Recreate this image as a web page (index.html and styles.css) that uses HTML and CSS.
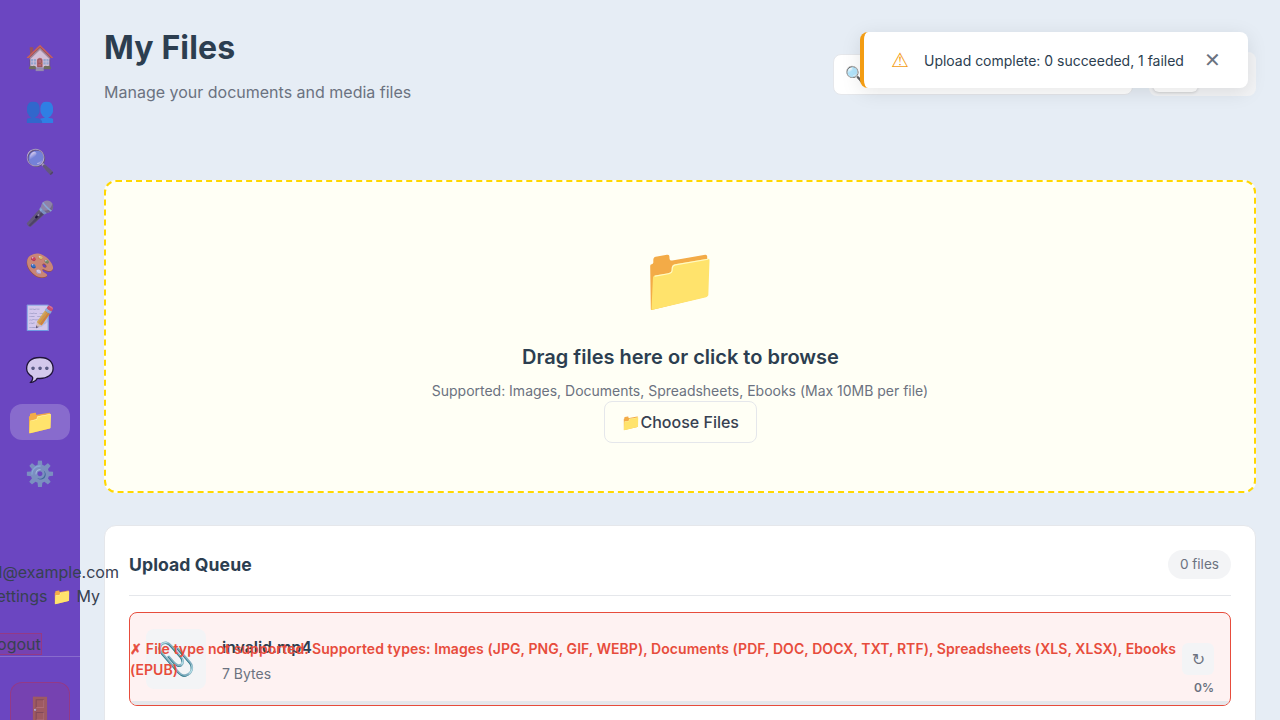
FILE: index.html
```html
<!DOCTYPE html>
<html lang="en">
<head>
<meta charset="utf-8">
<title>My Files</title>
<link rel="stylesheet" href="styles.css">
</head>
<body>
<div class="app">
  <aside class="sidebar">
    <nav class="nav">
      <a class="nav-item"><span>🏠</span></a>
      <a class="nav-item"><span>👥</span></a>
      <a class="nav-item"><span>🔍</span></a>
      <a class="nav-item"><span>🎤</span></a>
      <a class="nav-item"><span>🎨</span></a>
      <a class="nav-item"><span>📝</span></a>
      <a class="nav-item"><span>💬</span></a>
      <a class="nav-item active"><span>📁</span></a>
      <a class="nav-item"><span>⚙️</span></a>
    </nav>
    <div class="user-menu">
      <div class="user-line line-email">l@example.com</div>
      <div class="user-line line-links">ettings 📁 My</div>
      <div class="user-line line-logout"><span class="logout-link">Logout</span></div>
    </div>
    <div class="sidebar-foot"><a class="door"><span>🚪</span></a></div>
  </aside>
  <main class="main">
    <header class="header">
      <div>
        <h1 class="title">My Files</h1>
        <p class="subtitle">Manage your documents and media files</p>
      </div>
      <div class="tools">
        <div class="search">🔍</div>
        <div class="toggle"><div class="toggle-active"></div></div>
      </div>
    </header>
    <section class="dropzone">
      <div class="drop-icon">📁</div>
      <h3 class="drop-title">Drag files here or click to browse</h3>
      <p class="drop-text">Supported: Images, Documents, Spreadsheets, Ebooks (Max 10MB per file)</p>
      <button class="choose"><span>📁</span><span>Choose Files</span></button>
    </section>
    <section class="queue">
      <div class="queue-head">
        <h3 class="queue-title">Upload Queue</h3>
        <span class="count">0 files</span>
      </div>
      <div class="file">
        <div class="thumb">📎</div>
        <div class="info">
          <div class="name">invalid.mp4</div>
          <div class="size">7 Bytes</div>
        </div>
        <div class="retry">↻</div>
        <div class="track"></div>
        <div class="percent">0%</div>
        <div class="error"><div><span class="symbol">✗</span> File type not supported. Supported types: Images (JPG, PNG, GIF, WEBP), Documents (PDF, DOC, DOCX, TXT, RTF), Spreadsheets (XLS, XLSX), Ebooks (EPUB)</div></div>
      </div>
    </section>
  </main>
</div>
<div class="toast">
  <span class="toast-icon">⚠</span>
  <span class="toast-text">Upload complete: 0 succeeded, 1 failed</span>
  <span class="toast-close">✕</span>
</div>
</body>
</html>
```
FILE: styles.css
```css
* { box-sizing: border-box; margin: 0; padding: 0; }
body {
  font-family: Inter, sans-serif;
  font-size: 16px;
  line-height: 1.5;
  color: #374151;
  background: #e6edf5;
  height: 720px;
  overflow: hidden;
}
.app { display: flex; height: 720px; }
.sidebar {
  position: relative;
  z-index: 2;
  flex: 0 0 80px;
  width: 80px;
  min-width: 0;
  height: 720px;
  background: #6b46c1;
  display: flex;
  flex-direction: column;
  padding-top: 40px;
}
.nav { display: flex; flex-direction: column; gap: 16px; padding: 0 10px; }
.nav-item {
  height: 36px;
  border-radius: 12px;
  display: flex;
  align-items: center;
  justify-content: center;
  font-size: 24px;
  line-height: 36px;
}
.nav-item span { opacity: .7; }
.nav-item.active { background: rgba(255,255,255,.2); }
.nav-item.active span { opacity: 1; }
.user-menu { margin-top: 68px; height: 96px; white-space: nowrap; display: grid; grid-template-rows: repeat(4, 24px); }
.user-line { justify-self: start; }
.line-email { margin-left: -1.5px; }
.line-links { margin-left: -3.5px; }
.line-logout { grid-row: 4; margin-left: -13px; }
.logout-link { background: rgba(220,38,38,.1); border: 1px solid rgba(220,38,38,.3); }
.sidebar-foot { border-top: 1px solid rgba(255,255,255,.2); padding: 25px 10px 0; }
.door {
  display: flex;
  align-items: center;
  justify-content: center;
  height: 56px;
  border: 1px solid rgba(220,38,38,.3);
  border-radius: 12px;
  background: rgba(220,38,38,.1);
  font-size: 24px;
}
.door span { opacity: .7; }
.main { flex: 1; min-width: 0; height: 720px; overflow: hidden; padding: 24px 24px 0; }
.header { height: 156px; display: flex; justify-content: space-between; }
.title { font-size: 32px; line-height: 48px; font-weight: 700; letter-spacing: .15px; color: #2c3e50; }
.subtitle { color: #6b7280; margin-top: 8px; }
.tools { display: flex; gap: 16px; padding-top: 28px; height: 72px; align-items: center; }
.search {
  width: 300px;
  height: 41px;
  background: #fff;
  border: 1px solid #e5e7eb;
  border-radius: 8px;
  padding: 7px 11px;
}
.toggle { width: 107px; height: 44px; background: #f3f4f6; border-radius: 8px; padding: 4px; }
.toggle-active { width: 45px; height: 36px; background: #fff; border-radius: 6px; box-shadow: 0 1px 3px rgba(0,0,0,.15); }
.dropzone {
  height: 313px;
  border: 2px dashed #ffd700;
  border-radius: 12px;
  background: #fffff5;
  padding-top: 48px;
  display: flex;
  flex-direction: column;
  align-items: center;
}
.drop-icon { font-size: 64px; line-height: 96px; }
.drop-title { font-size: 20px; line-height: 30px; font-weight: 600; color: #2c3e50; margin-top: 16px; padding-left: 1px; }
.drop-text { font-size: 14px; line-height: 21px; letter-spacing: -.01px; color: #6b7280; margin-top: 8px; }
.choose {
  display: flex;
  align-items: center;
  height: 42px;
  width: 153px;
  padding: 0 16px;
  border: 1px solid #e5e7eb;
  border-radius: 8px;
  background: transparent;
  font: 500 16px/24px Inter, sans-serif;
  color: #374151;
}
.queue {
  height: 260px;
  margin-top: 32px;
  background: #fff;
  border: 1px solid #e5e7eb;
  border-radius: 12px;
  padding: 24px;
}
.queue-head {
  display: flex;
  align-items: center;
  justify-content: space-between;
  height: 46px;
  padding-bottom: 16px;
  border-bottom: 1px solid #e5e7eb;
}
.queue-title { font-size: 17.6px; line-height: 27px; font-weight: 700; letter-spacing: .09px; color: #2c3e50; }
.count { font-size: 13.6px; line-height: 21px; padding: 4px 12px; border-radius: 20px; background: #f3f4f6; color: #6b7280; }
.file {
  position: relative;
  display: flex;
  align-items: center;
  gap: 16px;
  height: 94px;
  margin-top: 16px;
  padding: 16px;
  border: 1px solid #e74c3c;
  border-radius: 8px;
  background: #fef2f2;
  overflow: hidden;
}
.thumb {
  width: 60px;
  height: 60px;
  border-radius: 8px;
  background: #f3f4f6;
  font-size: 32px;
  line-height: 60px;
  text-align: center;
}
.info { flex: 1; }
.name { font-weight: 600; color: #2c3e50; line-height: 24px; letter-spacing: -.08px; margin-bottom: 4px; }
.size { font-size: 14px; line-height: 21px; color: #6b7280; }
.retry { width: 32px; height: 32px; border-radius: 6px; background: #f3f4f6; color: #6b7280; text-align: center; font-family: "DejaVu Sans", sans-serif; line-height: 34px; padding-left: 1px; }
.track { position: absolute; left: 0; right: 0; bottom: 0; height: 4px; background: #e5e7eb; }
.percent { position: absolute; right: 16px; bottom: 8px; font-size: 12px; line-height: 18px; font-weight: 600; color: #6b7280; }
.error {
  position: absolute;
  inset: 0;
  display: flex;
  align-items: center;
  padding-right: 48px;
  font-size: 14px;
  line-height: 21px;
  font-weight: 600;
  letter-spacing: .067px;
  color: #e74c3c;
}
.symbol { font-family: "DejaVu Sans", sans-serif; font-weight: 700; line-height: 1; letter-spacing: .5px; -webkit-text-stroke: .6px #e74c3c; }
.toast {
  position: absolute;
  z-index: 10;
  left: 860px;
  top: 32px;
  width: 388px;
  height: 56px;
  display: flex;
  align-items: center;
  background: #fff;
  border-left: 4px solid #f39c12;
  border-radius: 8px;
  box-shadow: 0 4px 20px rgba(0,0,0,.1);
  padding-left: 24px;
  color: #2c3e50;
}
.toast-icon { width: 24px; text-align: center; font-family: "DejaVu Sans", sans-serif; font-size: 20px; color: #f39c12; }
.toast-text { margin-left: 12px; font-size: 14px; letter-spacing: -.02px; width: 260px; white-space: nowrap; }
.toast-close { margin-left: 16px; width: 24px; text-align: center; font-size: 20px; color: #6b7280; }
```
